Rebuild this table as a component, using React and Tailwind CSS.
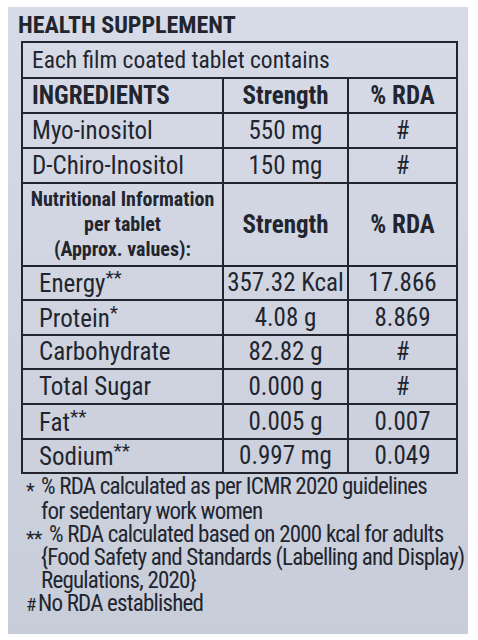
import React from 'react'

const ingredients = [
    ['Myo-inositol', '550 mg', '#'],
    ['D-Chiro-Inositol', '150 mg', '#'],
]

const nutrition = [
    ['Energy', '**', '357.32 Kcal', '17.866', 'h-[34px]'],
    ['Protein', '*', '4.08 g', '8.869', 'h-[35px]'],
    ['Carbohydrate', '', '82.82 g', '#', 'h-[34px]'],
    ['Total Sugar', '', '0.000 g', '#', 'h-[35px]'],
    ['Fat', '**', '0.005 g', '0.007', 'h-[35px]'],
    ['Sodium', '**', '0.997 mg', '0.049', 'h-[34px]'],
]

const cell = 'border-2 border-[#22252e] p-0 align-middle whitespace-nowrap'

export default function App() {
    return (<div className="min-h-[640px] bg-white pl-[8px] pt-[7px] text-[#22252e]"
                 style={{fontFamily: '"Roboto Condensed", "Liberation Sans", sans-serif'}}>
        <div className="w-[460px] h-[627px] bg-gradient-to-b from-[#d7dbe7] to-[#c8cdda] pt-[6px]">
            <h1 className="ml-[10px] text-[24px] leading-[24px] font-bold">HEALTH SUPPLEMENT</h1>

            <table className="ml-[13px] mt-[4px] w-[435px] table-fixed border-collapse text-[25px] leading-[28px]">
                <colgroup>
                    <col className="w-[201px]"/>
                    <col className="w-[125px]"/>
                    <col className="w-[109px]"/>
                </colgroup>
                <tbody>
                <tr className="h-[36px]">
                    <td colSpan={3} className={cell + ' pl-[9px] text-[23.5px]'}>Each film coated tablet contains</td>
                </tr>
                <tr className="h-[35px] font-bold">
                    <td className={cell + ' pl-[9px]'}>INGREDIENTS</td>
                    <td className={cell + ' text-center'}>Strength</td>
                    <td className={cell + ' text-center'}>% RDA</td>
                </tr>
                {ingredients.map(([name, str, rda]) => (<tr key={name} className="h-[35px]">
                    <td className={cell + ' pl-[9px]'}>{name}</td>
                    <td className={cell + ' text-center'}>{str}</td>
                    <td className={cell + ' text-center'}>{rda}</td>
                </tr>))}
                <tr className="h-[83px] font-bold">
                    <td className={cell + ' text-center text-[20px] leading-[25px]'}>
                        Nutritional Information<br/>per tablet<br/>(Approx. values):
                    </td>
                    <td className={cell + ' text-center'}>Strength</td>
                    <td className={cell + ' text-center'}>% RDA</td>
                </tr>
                {nutrition.map(([name, star, str, rda, h]) => (<tr key={name} className={h}>
                    <td className={cell + ' pl-[16px]'}>
                        {name}{star && <span className="text-[19px] leading-none align-[8px]">{star}</span>}
                    </td>
                    <td className={cell + ' text-center'}>{str}</td>
                    <td className={cell + ' text-center'}>{rda}</td>
                </tr>))}
                </tbody>
            </table>

            <div className="ml-[18px] mt-[1px] text-[23px] leading-[23px] tracking-[-0.8px] whitespace-nowrap">
                <div>
                    <span className="relative top-[4px] inline-block w-[15px] text-[20px] leading-none">*</span>% RDA calculated as per ICMR 2020 guidelines
                </div>
                <div className="pl-[15px] mt-[2px]">for sedentary work women</div>
                <div>
                    <span className="relative top-[4px] inline-block w-[23px] text-[20px] leading-none">**</span>% RDA calculated based on 2000 kcal for adults
                </div>
                <div className="pl-[15px]">{'{'}Food Safety and Standards (Labelling and Display)</div>
                <div className="pl-[15px]">Regulations, 2020{'}'}</div>
                <div><span className="inline-block w-[12px] text-[19px] leading-none">#</span>No RDA established</div>
            </div>
        </div>
    </div>)
}
